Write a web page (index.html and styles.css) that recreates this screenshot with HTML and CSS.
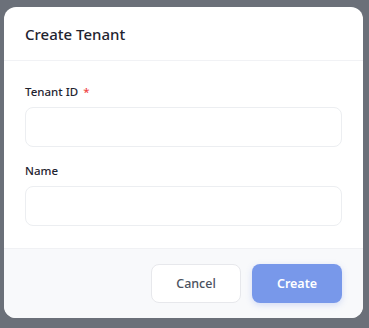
FILE: index.html
```html
<!DOCTYPE html>
<html>
<head>
<meta charset="utf-8">
<link rel="stylesheet" href="styles.css">
</head>
<body>
<div class="modal">
  <div class="modal-header">
    <h2 class="title">Create Tenant</h2>
  </div>
  <div class="modal-body">
    <div class="field">
      <label class="label">Tenant ID <span class="req">*</span></label>
      <input class="input" type="text">
    </div>
    <div class="field">
      <label class="label">Name</label>
      <input class="input" type="text">
    </div>
  </div>
  <div class="modal-footer">
    <button class="btn btn-cancel">Cancel</button>
    <button class="btn btn-create">Create</button>
  </div>
</div>
</body>
</html>
```
FILE: styles.css
```css
html, body {
  margin: 0;
  height: 100%;
}
body {
  background: #6b7079;
  padding: 7px 6px 0 4px;
  box-sizing: border-box;
  font-family: "Noto Sans", Inter, sans-serif;
}
.modal {
  width: 359px;
  background: #ffffff;
  border-radius: 12px;
  overflow: hidden;
}
.modal-header {
  height: 53px;
  display: flex;
  align-items: center;
  padding: 0 21px;
  border-bottom: 1px solid #f1f2f5;
}
.title {
  margin: 0;
  font-size: 15px;
  font-weight: 500;
  color: #1f2430;
}
.modal-body {
  padding: 23px 21px 22px;
  display: flex;
  flex-direction: column;
  gap: 16px;
}
.field {
  display: flex;
  flex-direction: column;
  gap: 7px;
}
.label {
  font-size: 11.5px;
  line-height: 16px;
  font-weight: 500;
  color: #1f2430;
}
.req {
  color: #ef4444;
  margin-left: 2px;
}
.input {
  height: 40px;
  box-sizing: border-box;
  border: 1px solid #eceef1;
  border-radius: 8px;
  background: #fff;
  width: 100%;
  margin: 0;
  font-family: inherit;
}
.modal-footer {
  background: #f8f9fb;
  border-top: 1px solid #f0f1f4;
  padding: 15px 21px 15px;
  display: flex;
  justify-content: flex-end;
  gap: 11px;
}
.btn {
  width: 90px;
  height: 39px;
  border-radius: 8px;
  font-family: inherit;
  font-size: 12.5px;
  font-weight: 500;
  cursor: pointer;
}
.btn-cancel {
  background: #fff;
  border: 1px solid #e7e8ec;
  color: #4b5260;
}
.btn-create {
  background: #7898ea;
  border: none;
  color: #fff;
  font-weight: 600;
  box-shadow: 0 2px 6px rgba(99, 132, 230, 0.25);
}
```
